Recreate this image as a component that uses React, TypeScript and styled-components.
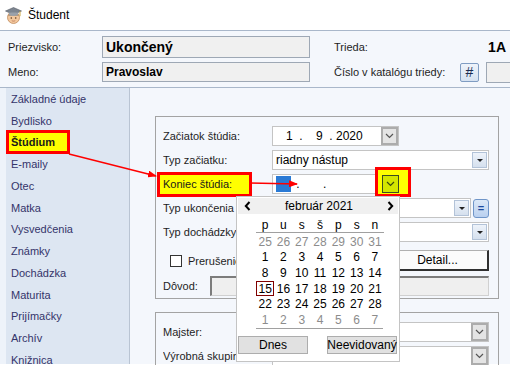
import React from 'react'
import styled, { createGlobalStyle } from 'styled-components'

const GlobalStyle = createGlobalStyle`
  body {
    margin: 0;
    background: #fff;
    font-family: 'Liberation Sans', Arial, sans-serif;
    font-size: 11px;
    color: #1e1e1e;
  }
`

const Frame = styled.div`
  position: relative;
  width: 510px;
  height: 365px;
  overflow: hidden;
  background: #fff;
`

const TitleBar = styled.div`
  height: 30px;
  display: flex;
  align-items: center;
  gap: 6px;
  padding-left: 5px;
  border-bottom: 1px solid #a9b7ca;
  font-size: 12px;
  color: #000;
`

const Header = styled.div`
  height: 57px;
  box-sizing: border-box;
  background: #f4f7fc;
  border-bottom: 1px solid #a9b7ca;
  padding: 5px 0 0 8px;
  display: flex;
  flex-direction: column;
  gap: 4px;
  overflow: hidden;
`

const HeaderRow = styled.div<{ $h: number }>`
  display: flex;
  align-items: center;
  height: ${(p) => p.$h}px;
`

const HeaderLabel = styled.span`
  width: 94px;
  flex: none;
`

const ReadonlyBox = styled.div<{ $size: number }>`
  width: 208px;
  height: 100%;
  box-sizing: border-box;
  flex: none;
  background: #f0f0f0;
  border: 1px solid #9ea8b5;
  padding-left: 3px;
  display: flex;
  align-items: center;
  font-weight: bold;
  font-size: ${(p) => p.$size}px;
  color: #000;
`

const RightLabel = styled.span<{ $w?: number }>`
  margin-left: 24px;
  ${(p) => (p.$w ? `width: ${p.$w}px; flex: none;` : 'flex: 1;')}
`

const ClassValue = styled.span`
  font-weight: bold;
  font-size: 14px;
  color: #000;
  margin-right: 4px;
`

const HashButton = styled.div`
  width: 19px;
  height: 19px;
  box-sizing: border-box;
  flex: none;
  border: 1px solid #7f9cc2;
  border-radius: 2px;
  background: linear-gradient(#eef3fa, #d6e2f1);
  display: flex;
  align-items: center;
  justify-content: center;
  font-size: 14px;
  color: #1a2a50;
`

const CatalogInput = styled.div`
  margin-left: 7px;
  width: 40px;
  height: 19px;
  flex: none;
  background: #f0f0f0;
  border: 1px solid #9ea8b5;
`

const Body = styled.div`
  display: flex;
  height: 276px;
  background: #eef3fa;
`

const Nav = styled.div`
  width: 123px;
  margin-left: 6px;
  background: #dde6f2;
  border-right: 1px solid #b9c4d3;
  flex: none;
`

const NavItem = styled.div`
  height: 21.75px;
  display: flex;
  align-items: center;
  padding-left: 5px;
  color: #34346a;
`

const NavMark = styled.span`
  margin-left: -2px;
  padding: 0 12px 0 2px;
  height: 18px;
  display: flex;
  align-items: center;
  background: #ffff00;
  box-shadow: 0 0 0 3px #ff0000;
  font-weight: bold;
  color: #1a1a1a;
`

const Content = styled.div`
  flex: 1;
  background: #f4f7fc;
  padding: 28px 11px 0 25px;
  display: flex;
  flex-direction: column;
  gap: 13px;
`

const GroupBox = styled.div<{ $bottom: number }>`
  border: 1px solid #a3a3a3;
  padding: 9px 9px ${(p) => p.$bottom}px 7px;
  display: flex;
  flex-direction: column;
  gap: 4px;
`

const FormRow = styled.div<{ $h?: number }>`
  position: relative;
  display: flex;
  align-items: center;
  height: ${(p) => p.$h ?? 20}px;
`

const FieldLabel = styled.span<{ $w?: number }>`
  width: ${(p) => p.$w ?? 109}px;
  flex: none;
  white-space: nowrap;
  overflow: hidden;
`

const MarkedLabel = styled.span`
  margin-left: -3px;
  padding-left: 3px;
  width: 86px;
  height: 19px;
  margin-right: 23px;
  flex: none;
  display: flex;
  align-items: center;
  background: #ffff00;
  box-shadow: 0 0 0 3px #ff0000;
  color: #1a1a1a;
`

const Field = styled.div<{ $w: number }>`
  position: relative;
  width: ${(p) => p.$w}px;
  height: 20px;
  box-sizing: border-box;
  flex: none;
  background: #fff;
  border: 1px solid #c4c4c4;
  display: flex;
  align-items: center;
  padding-left: 3px;
  font-size: 12px;
  color: #000;
  white-space: pre;
`

const DateText = styled.span`
  font-size: 12px;
  white-space: pre;
`

const Selection = styled.span`
  width: 15px;
  height: 16px;
  background: #2a7ad5;
  margin-right: 2px;
`

const DropButton = styled.div`
  position: absolute;
  right: 0;
  top: 0;
  width: 17px;
  height: 18px;
  box-sizing: border-box;
  border: 2px solid #acacac;
  background: #e4e4e4;
  display: flex;
  align-items: center;
  justify-content: center;
`

const ComboArrow = styled.div`
  position: absolute;
  right: 1px;
  top: 1px;
  width: 15px;
  height: 16px;
  box-sizing: border-box;
  border: 1px solid #b3c3d8;
  background: linear-gradient(#eef3fa, #d5e0ee);
  display: flex;
  align-items: center;
  justify-content: center;
  &::after {
    content: '';
    border-left: 3px solid transparent;
    border-right: 3px solid transparent;
    border-top: 3px solid #222;
  }
`

// annotation box drawn over the date field's drop button
const Marker = styled.div`
  position: absolute;
  left: 212px;
  top: -7px;
  width: 36px;
  height: 30px;
  box-sizing: border-box;
  border: 3px solid #ff0000;
  background: #ffff00;
`

const MarkedDrop = styled.div`
  position: absolute;
  left: 219px;
  top: 1px;
  width: 17px;
  height: 18px;
  box-sizing: border-box;
  border: 1px solid #3d4d20;
  background: #d4e600;
  display: flex;
  align-items: center;
  justify-content: center;
`

const EqButton = styled.div`
  margin-left: 2px;
  width: 16px;
  height: 19px;
  box-sizing: border-box;
  flex: none;
  border: 1px solid #6f95c8;
  border-radius: 3px;
  background: linear-gradient(#dbe8f8, #b9d0ef);
  color: #1c4aa0;
  font-weight: bold;
  display: flex;
  align-items: center;
  justify-content: center;
  font-size: 11px;
`

const CheckBox = styled.span`
  width: 12px;
  height: 12px;
  box-sizing: border-box;
  border: 1px solid #333;
  background: #fff;
  margin: 0 6px 0 7px;
  flex: none;
`

const CheckLabel = styled.span`
  width: 48px;
  overflow: hidden;
  white-space: nowrap;
  flex: none;
`

const DetailButton = styled.div`
  margin-left: auto;
  width: 102px;
  height: 21px;
  box-sizing: border-box;
  background: #fbfbfb;
  border: 1px solid #b0b0b0;
  border-right: 2px solid #303030;
  border-bottom: 2px solid #303030;
  display: flex;
  align-items: center;
  justify-content: center;
  font-size: 12px;
  color: #000;
`

const ReasonInput = styled.div`
  flex: 1;
  height: 20px;
  box-sizing: border-box;
  background: #efefef;
  border: 1px solid #d0d0d0;
  border-top: 2px solid #7c7c7c;
  border-left: 2px solid #7c7c7c;
`

const Popup = styled.div`
  position: absolute;
  left: 236px;
  top: 196px;
  width: 164px;
  height: 166px;
  box-sizing: border-box;
  background: #fff;
  border: 1px solid #c4c4c4;
  padding: 1px;
  display: flex;
  flex-direction: column;
  font-size: 12px;
  color: #000;
`

const PopupHeader = styled.div`
  height: 16px;
  background: #f0f0f0;
  display: flex;
  align-items: center;
  justify-content: space-between;
  padding: 0 4px 0 6px;
`

const MonthTitle = styled.span`
  font-size: 12px;
  color: #000;
`

const DayGrid = styled.div`
  margin: 4px 15px 0 18px;
  display: grid;
  grid-template-columns: repeat(7, 18.3px);
  border-bottom: 1px solid #a0a0a0;
`

const DayHead = styled.div`
  height: 14px;
  display: flex;
  align-items: center;
  justify-content: center;
  border-bottom: 1px solid #a0a0a0;
  margin-bottom: 1px;
`

const DayCell = styled.div<{ $muted?: boolean; $today?: boolean }>`
  height: 15.6px;
  display: flex;
  align-items: center;
  justify-content: center;
  color: ${(p) => (p.$muted ? '#8c8c8c' : '#000')};
  box-sizing: border-box;
  ${(p) => (p.$today ? 'outline: 1px solid #800000; outline-offset: -1px;' : '')}
`

const PopupFooter = styled.div`
  margin-top: 7px;
  display: flex;
  justify-content: space-between;
  padding: 0 1px 0 0;
`

const PopupButton = styled.div<{ $w: number }>`
  width: ${(p) => p.$w}px;
  height: 18px;
  box-sizing: border-box;
  background: #e1e1e1;
  border: 1px solid #adadad;
  display: flex;
  align-items: center;
  justify-content: center;
`

const Overlay = styled.svg`
  position: absolute;
  left: 0;
  top: 0;
  pointer-events: none;
`

const Chevron = ({ color = '#555' }: { color?: string }) => (
  <svg width="9" height="6" viewBox="0 0 9 6">
    <path d="M1 1l3.5 3.5L8 1" fill="none" stroke={color} strokeWidth="1.2" />
  </svg>
)

const Nudge = ({ dir }: { dir: 'left' | 'right' }) => (
  <svg width="7" height="10" viewBox="0 0 7 10">
    <path
      d={dir === 'left' ? 'M5.5 1L1.8 5l3.7 4' : 'M1.5 1l3.7 4-3.7 4'}
      fill="none"
      stroke="#000"
      strokeWidth="2"
    />
  </svg>
)

const StudentIcon = () => (
  <svg width="17" height="19" viewBox="0 0 17 19">
    <circle cx="8.5" cy="11.5" r="6" fill="#f3c89e" stroke="#c08a5c" strokeWidth="0.8" />
    <path d="M3 9.5c1-2.5 10-2.5 11 0" fill="#8a6a48" />
    <path d="M0.5 5L8.5 1.5 16.5 5 8.5 8.5z" fill="#7d8590" stroke="#555c66" strokeWidth="0.6" />
    <path d="M4 6.5v2.5c2.5 1.2 6.5 1.2 9 0V6.5" fill="#9aa1aa" />
    <path d="M15 5.2v5" stroke="#c9a640" strokeWidth="1" />
    <circle cx="6.3" cy="12" r="0.8" fill="#5a3a20" />
    <circle cx="10.7" cy="12" r="0.8" fill="#5a3a20" />
    <path d="M6.8 14.6c1 .7 2.4.7 3.4 0" fill="none" stroke="#b06a4a" strokeWidth="0.7" />
  </svg>
)

const navItems = [
  'Základné údaje',
  'Bydlisko',
  'Štúdium',
  'E-maily',
  'Otec',
  'Matka',
  'Vysvedčenia',
  'Známky',
  'Dochádzka',
  'Maturita',
  'Prijímačky',
  'Archív',
  'Knižnica',
]

const dayNames = ['p', 'u', 's', 'š', 'p', 's', 'n']

// februar 2021, starts on monday; m = other month
const weeks: { d: number; m?: boolean }[][] = [
  [25, 26, 27, 28, 29, 30, 31].map((d) => ({ d, m: true })),
  [1, 2, 3, 4, 5, 6, 7].map((d) => ({ d })),
  [8, 9, 10, 11, 12, 13, 14].map((d) => ({ d })),
  [15, 16, 17, 18, 19, 20, 21].map((d) => ({ d })),
  [22, 23, 24, 25, 26, 27, 28].map((d) => ({ d })),
  [1, 2, 3, 4, 5, 6, 7].map((d) => ({ d, m: true })),
]

const App: React.FC = () => {
  return (
    <Frame>
      <GlobalStyle />
      <TitleBar>
        <StudentIcon />
        <span>Študent</span>
      </TitleBar>

      <Header>
        <HeaderRow $h={22}>
          <HeaderLabel>Priezvisko:</HeaderLabel>
          <ReadonlyBox $size={14}>Ukončený</ReadonlyBox>
          <RightLabel>Trieda:</RightLabel>
          <ClassValue>1A</ClassValue>
        </HeaderRow>
        <HeaderRow $h={20}>
          <HeaderLabel>Meno:</HeaderLabel>
          <ReadonlyBox $size={12}>Pravoslav</ReadonlyBox>
          <RightLabel $w={126}>Číslo v katalógu triedy:</RightLabel>
          <HashButton>#</HashButton>
          <CatalogInput />
        </HeaderRow>
      </Header>

      <Body>
        <Nav>
          {navItems.map((item) => (
            <NavItem key={item}>
              {item === 'Štúdium' ? <NavMark>{item}</NavMark> : item}
            </NavItem>
          ))}
        </Nav>

        <Content>
          <GroupBox $bottom={2}>
            <FormRow>
              <FieldLabel>Začiatok štúdia:</FieldLabel>
              <Field $w={127}>
                <DateText>{'   1  .    9  . 2020'}</DateText>
                <DropButton>
                  <Chevron />
                </DropButton>
              </Field>
            </FormRow>
            <FormRow>
              <FieldLabel>Typ začiatku:</FieldLabel>
              <Field $w={217}>
                riadny nástup
                <ComboArrow />
              </Field>
            </FormRow>
            <FormRow>
              <MarkedLabel>Koniec štúdia:</MarkedLabel>
              <Field $w={127}>
                <Selection />
                <DateText>{' .       .'}</DateText>
              </Field>
              <Marker />
              <MarkedDrop>
                <Chevron color="#3a4a10" />
              </MarkedDrop>
            </FormRow>
            <FormRow>
              <FieldLabel>Typ ukončenia</FieldLabel>
              <Field $w={199}>
                <ComboArrow />
              </Field>
              <EqButton>=</EqButton>
            </FormRow>
            <FormRow>
              <FieldLabel>Typ dochádzky</FieldLabel>
              <Field $w={217}>
                <ComboArrow />
              </Field>
            </FormRow>
            <FormRow $h={21} style={{ marginTop: 4 }}>
              <CheckBox />
              <CheckLabel>Prerušenie štúdia</CheckLabel>
              <DetailButton>Detail...</DetailButton>
            </FormRow>
            <FormRow style={{ marginTop: 1 }}>
              <FieldLabel $w={47}>Dôvod:</FieldLabel>
              <ReasonInput />
            </FormRow>
          </GroupBox>

          <GroupBox $bottom={0}>
            <FormRow>
              <FieldLabel>Majster:</FieldLabel>
              <Field $w={217}>
                <DropButton>
                  <Chevron />
                </DropButton>
              </Field>
            </FormRow>
            <FormRow>
              <FieldLabel>Výrobná skupina:</FieldLabel>
              <Field $w={217}>
                <DropButton>
                  <Chevron />
                </DropButton>
              </Field>
            </FormRow>
          </GroupBox>
        </Content>
      </Body>

      <Popup>
        <PopupHeader>
          <Nudge dir="left" />
          <MonthTitle>február 2021</MonthTitle>
          <Nudge dir="right" />
        </PopupHeader>
        <DayGrid>
          {dayNames.map((n, i) => (
            <DayHead key={i}>{n}</DayHead>
          ))}
          {weeks.flatMap((week, w) =>
            week.map((c, i) => (
              <DayCell key={`${w}-${i}`} $muted={c.m} $today={w === 3 && i === 0}>
                {c.d}
              </DayCell>
            )),
          )}
        </DayGrid>
        <PopupFooter>
          <PopupButton $w={70}>Dnes</PopupButton>
          <PopupButton $w={70}>Neevidovaný</PopupButton>
        </PopupFooter>
      </Popup>

      <Overlay width="510" height="365">
        <defs>
          <marker id="head" markerWidth="9" markerHeight="7" refX="8" refY="3.5" orient="auto" markerUnits="userSpaceOnUse">
            <path d="M0 0L9 3.5 0 7z" fill="#ff0000" />
          </marker>
        </defs>
        <line x1="69" y1="154" x2="156" y2="176" stroke="#ff0000" strokeWidth="1.5" markerEnd="url(#head)" />
        <line x1="250" y1="183" x2="297" y2="184" stroke="#ff0000" strokeWidth="1.5" markerEnd="url(#head)" />
      </Overlay>
    </Frame>
  )
}

export default App
